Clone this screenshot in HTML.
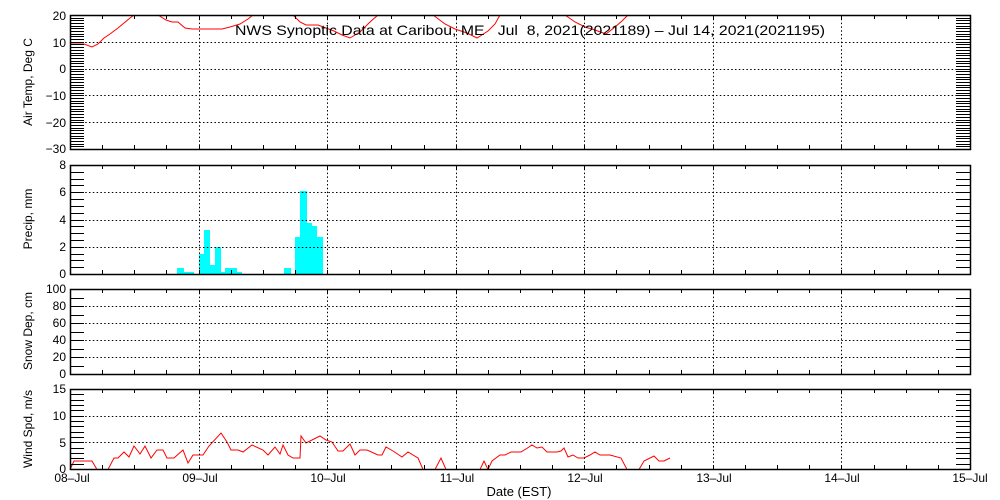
<!DOCTYPE html>
<html><head><meta charset="utf-8"><style>
html,body{margin:0;padding:0;background:#fff;}
svg{display:block;font-family:"Liberation Sans",sans-serif;}
text{font-size:12px;fill:#000;}
</style></head><body>
<svg id="s" width="1000" height="500" xmlns="http://www.w3.org/2000/svg">
<g fill="#00ffff">
<rect x="177" y="268" width="7" height="6"/>
<rect x="184" y="272" width="10" height="2"/>
<rect x="199" y="254" width="5" height="20"/>
<rect x="204" y="230" width="6" height="44"/>
<rect x="210" y="265" width="5" height="9"/>
<rect x="215" y="247" width="6" height="27"/>
<rect x="221" y="272" width="4" height="2"/>
<rect x="225" y="268" width="12" height="6"/>
<rect x="237" y="272" width="5" height="2"/>
<rect x="284" y="268" width="7" height="6"/>
<rect x="295" y="237" width="5" height="37"/>
<rect x="300" y="191" width="7" height="83"/>
<rect x="307" y="223" width="5" height="51"/>
<rect x="312" y="226" width="5" height="48"/>
<rect x="317" y="237" width="6" height="37"/>
</g>
<g fill="none" stroke="#ff0000" stroke-width="1">
<polyline points="70,44 84,44 92,47 98,44 104,38 110,34 118,28 124,23 130,18 134,15"/>
<polyline points="158,15 166,20 172,22 178,22 185,28 192,29 222,29 230,27 240,24 248,19 253,15"/>
<polyline points="293,15 300,22 306,25 318,25 326,28 334,31 342,35 350,38 360,32 370,22 378,15"/>
<polyline points="433,15 445,24 455,29 467,33 477,38 488,31 495,24 500,15"/>
<polyline points="565,15 575,22 585,27 595,30 606,34 615,27 622,21 628,15"/>
<polyline points="70,469.5 74,461 92,461 97,469.5 108,469.5 114,458 118,458 124,452 129,457 134,446 140,454 145,446 151,458 157,450 163,450 167,458 174,458 183,450 188,463 193,455 203,455 209,446 221,433 227,442 231,450 238,450 243,452 252,445 263,450 268,455 275,447 280,454 283,445 288,455 293,458 300,458 301,436 306,443 320,436 326,440 332,442 338,451 343,451 350,444 355,455 360,450 367,450 378,455 382,455 386,447 393,451 402,457 408,452 418,458 423,469.5 435,469.5 441,458 446,469.5 480,469.5 484,461 488,469.5 492,461 500,455 505,455 511,452 521,452 529,447 532,445 537,448 542,447 547,452 557,452 561,451 564,448 568,457 573,455 578,458 584,458 590,455 595,452 600,455 610,455 621,458 627,469.5 639,469.5 644,461 654,456 659,461 664,461 670,458"/>
</g>
<g id="g"></g>
<text x="235" y="35" style="font-size:14px;white-space:pre" xml:space="preserve" textLength="590" lengthAdjust="spacingAndGlyphs">NWS Synoptic Data at Caribou, ME   Jul  8, 2021(2021189) – Jul 14, 2021(2021195)</text>
<g text-anchor="end">
<text x="66" y="20">20</text><text x="66" y="47">10</text><text x="66" y="73">0</text>
<text x="66" y="100">−10</text><text x="66" y="127">−20</text><text x="66" y="153">−30</text>
<text x="66" y="169">8</text><text x="66" y="196">6</text><text x="66" y="224">4</text>
<text x="66" y="251">2</text><text x="66" y="278">0</text>
<text x="66" y="293">100</text><text x="66" y="310">80</text><text x="66" y="327">60</text>
<text x="66" y="344">40</text><text x="66" y="361">20</text><text x="66" y="378">0</text>
<text x="66" y="393">15</text><text x="66" y="420">10</text><text x="66" y="447">5</text><text x="66" y="473">0</text>
</g>
<g style="font-size:13px" text-anchor="middle">
<text transform="translate(32,82) rotate(-90)">Air Temp, Deg C</text>
<text transform="translate(32,219) rotate(-90)">Precip, mm</text>
<text transform="translate(32,331) rotate(-90)">Snow Dep, cm</text>
<text transform="translate(32,429) rotate(-90)">Wind Spd, m/s</text>
</g>
<g text-anchor="middle">
<text x="72" y="482">08–Jul</text><text x="200" y="482">09–Jul</text><text x="328" y="482">10–Jul</text>
<text x="457" y="482">11–Jul</text><text x="585" y="482">12–Jul</text><text x="714" y="482">13–Jul</text>
<text x="842" y="482">14–Jul</text><text x="970" y="482">15–Jul</text>
<text x="519" y="496" style="font-size:13px">Date (EST)</text>
</g>
</svg>
<script>
var g=document.getElementById('g'),h='';
function L(x1,y1,x2,y2,d){h+='<line x1="'+x1+'" y1="'+y1+'" x2="'+x2+'" y2="'+y2+'" stroke="#000" stroke-width="1"'+(d?' stroke-dasharray="1.5 2.3"':'')+'/>';}
var P=[[15,149,-30,20,1,10],[165,274,0,8,0.5,2],[289,374,0,100,10,20],[389,469,0,15,1,5]];
var X0=70,X1=970,dw=(X1-X0)/7;
P.forEach(function(p){var t=p[0],b=p[1],mn=p[2],mx=p[3];
 function Y(v){return b-(v-mn)/(mx-mn)*(b-t);}
 for(var v=mn+p[5];v<mx-1e-6;v+=p[5]){var y=Math.round(Y(v))+.5;L(X0,y,X1,y,1);}
 for(var d=1;d<7;d++){var x=Math.round(X0+d*dw)+.5;L(x,t,x,b,1);}
 for(var v=mn;v<=mx+1e-6;v+=p[4]){var y=Math.round(Y(v))+.5;L(X0,y,X0+14,y);L(X1-14,y,X1,y);}
 for(var q=1;q<28;q++){var x=Math.round(X0+q*dw/4)+.5;L(x,t,x,t+4);L(x,b,x,b-4);}
 h+='<rect x="'+(X0+.5)+'" y="'+(t+.5)+'" width="'+(X1-X0)+'" height="'+(b-t)+'" fill="none" stroke="#000" stroke-width="1.5"/>';
});
g.innerHTML=h;
</script>
</body></html>
